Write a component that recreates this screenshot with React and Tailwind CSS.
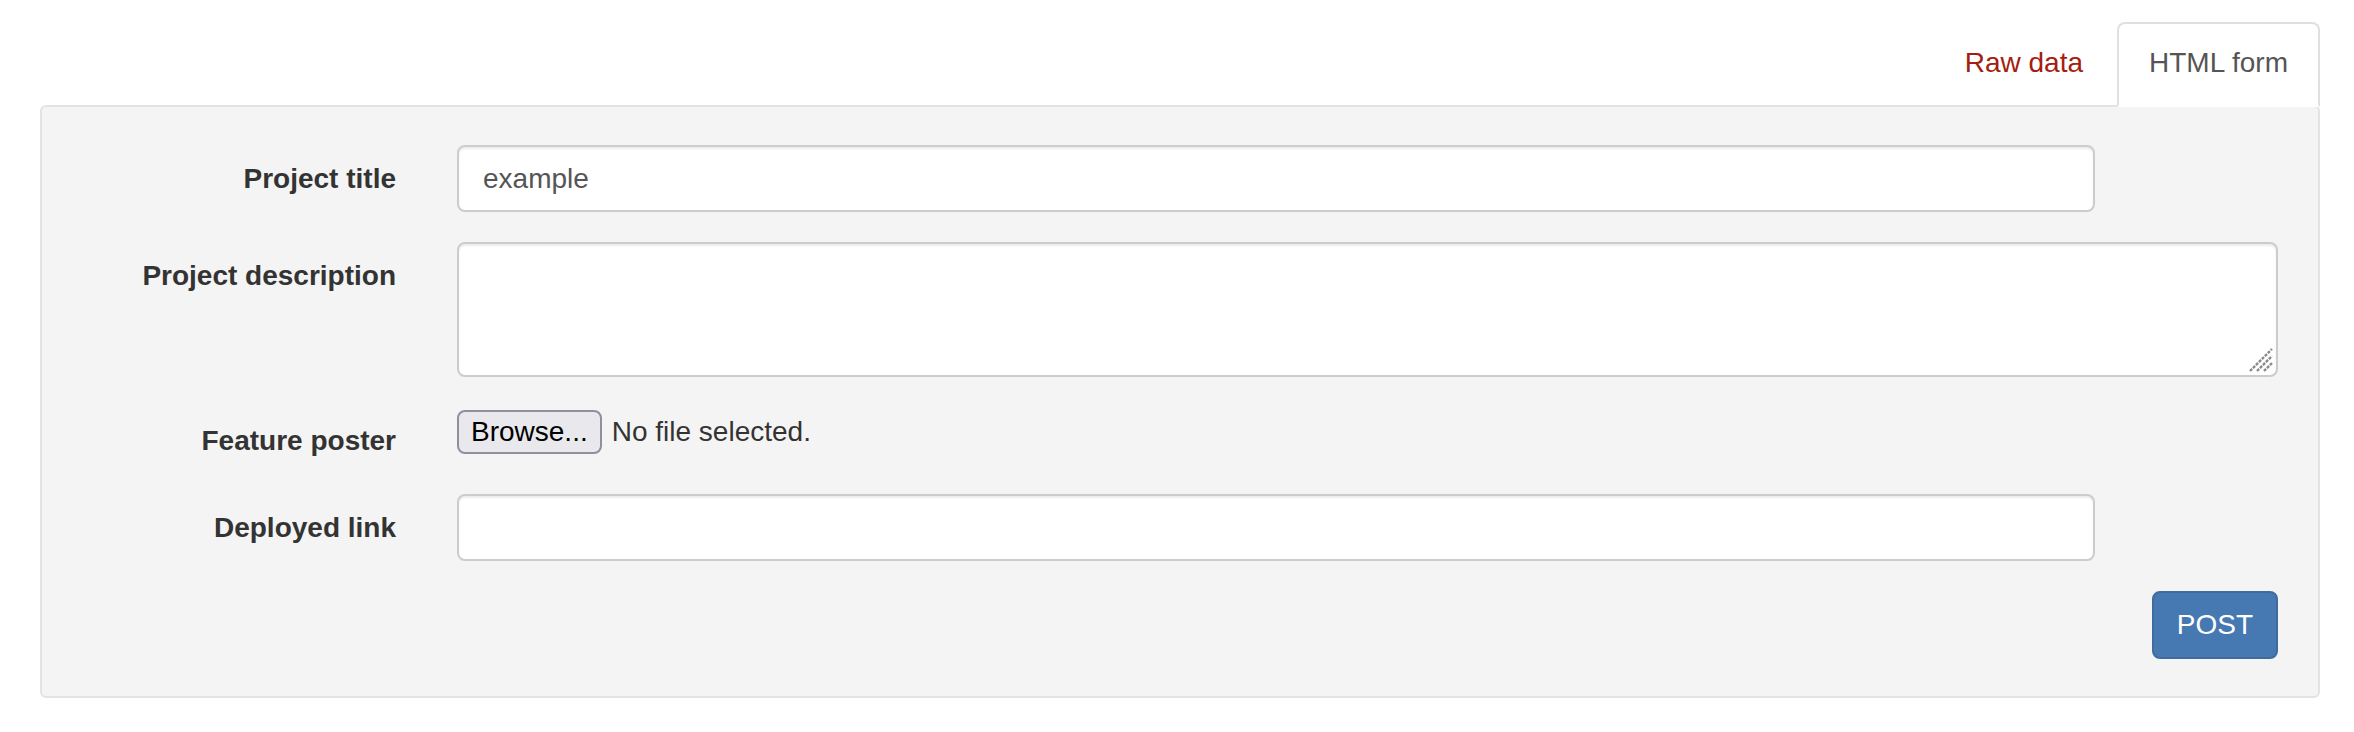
import React from 'react'

const font = {fontFamily: '"Liberation Sans", Arial, sans-serif'};

function Label({children}) {
    return (
        <label className="pt-[14px] leading-[40px] text-right font-bold text-[28px] text-[#333]">
            {children}
        </label>
    )
}

export default function App() {
    return (
        <div className="min-h-screen bg-white pt-[22px] pl-[40px] pr-[34px] text-[28px] text-[#333]" style={font}>
            <div className="flex justify-end">
                <a href="#" className="px-[30px] pt-[19px] pb-[20px] leading-[40px] mr-[2px] text-[#a41e11] border-2 border-transparent">
                    Raw data
                </a>
                <a href="#"
                   className="relative z-10 -mb-[2px] px-[30px] pt-[19px] pb-[20px] leading-[40px] text-[#555] bg-white border-2 border-[#e0e0e0] border-b-transparent rounded-t-[8px]">
                    HTML form
                </a>
            </div>
            <div className="border-2 border-[#e3e3e3] rounded-[6px] bg-[#f4f4f4] pt-[38px] pb-[37px] pr-[40px]">
                <form className="grid grid-cols-[354px_1fr] gap-x-[61px] gap-y-[30px]">
                    <Label>Project title</Label>
                    <div>
                        <input type="text" defaultValue="example"
                               className="w-[1638px] h-[67px] px-[24px] bg-white border-2 border-[#ccc] rounded-[8px] text-[28px] text-[#555] shadow-[inset_0_2px_2px_rgba(0,0,0,0.075)] outline-none"
                               style={font}/>
                    </div>

                    <Label>Project description</Label>
                    <div className="relative">
                        <textarea
                            className="block w-full h-[135px] px-[24px] py-[12px] bg-white border-2 border-[#ccc] rounded-[8px] text-[28px] text-[#555] shadow-[inset_0_2px_2px_rgba(0,0,0,0.075)] outline-none resize-none"
                            style={font}/>
                        <svg className="absolute right-[4px] bottom-[4px]" width="26" height="26" viewBox="0 0 26 26">
                            <g stroke="#8a8a8a" strokeWidth="2.4" strokeDasharray="3 1.2">
                                <line x1="2" y1="24" x2="24" y2="2"/>
                                <line x1="9" y1="24" x2="24" y2="9"/>
                                <line x1="16" y1="24" x2="24" y2="16"/>
                            </g>
                        </svg>
                    </div>

                    <Label>Feature poster</Label>
                    <div className="flex items-start pt-[3px] h-[57px]">
                        <button type="button"
                                className="h-[44px] px-[12px] bg-[#e9e9ed] border-2 border-[#8f8f9d] rounded-[8px] text-[28px] text-black leading-none"
                                style={font}>
                            Browse...
                        </button>
                        <span className="ml-[10px] leading-[44px] text-[#333]">No file selected.</span>
                    </div>

                    <Label>Deployed link</Label>
                    <div>
                        <input type="text"
                               className="w-[1638px] h-[67px] px-[24px] bg-white border-2 border-[#ccc] rounded-[8px] text-[28px] text-[#555] shadow-[inset_0_2px_2px_rgba(0,0,0,0.075)] outline-none"
                               style={font}/>
                    </div>

                    <div className="col-span-2 flex justify-end">
                        <button type="submit"
                                className="h-[68px] px-[23px] bg-[#4679b1] border-2 border-[#3e6c9f] rounded-[8px] text-white text-[28px]"
                                style={font}>
                            POST
                        </button>
                    </div>
                </form>
            </div>
        </div>
    )
}
